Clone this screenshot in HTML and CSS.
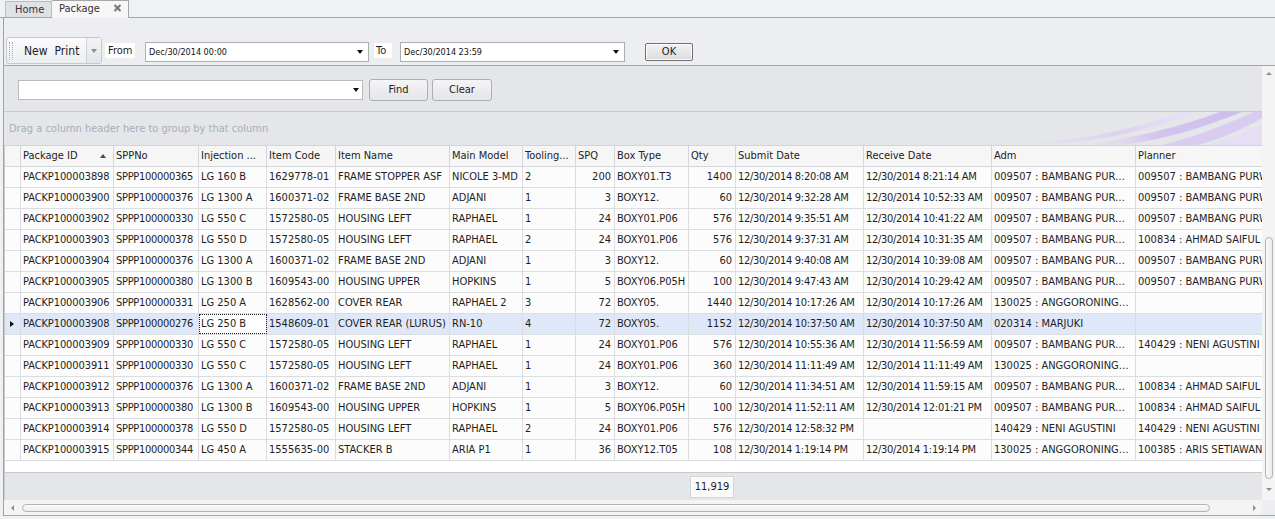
FILE: index.html
```html
<!DOCTYPE html>
<html>
<head>
<meta charset="utf-8">
<title>Package</title>
<link rel="stylesheet" href="styles.css">
</head>
<body>
<div class="tabs">
  <div class="tab home">Home</div>
  <div class="tab active"><span class="tabtext">Package</span><svg class="close" width="9" height="8" viewBox="0 0 9 8"><path d="M1.5 1L7.5 7M7.5 1L1.5 7" stroke="#767676" stroke-width="2"/></svg></div>
</div>
<div class="frame">
  <div class="toolbar">
    <div class="bar">
      <span class="grip"></span>
      <span class="tbtn new">New</span>
      <span class="tbtn print">Print</span>
      <span class="ddsep"><span class="caret grey"></span></span>
    </div>
    <span class="lbl from">From</span>
    <div class="dateedit d1"><span class="dtext">Dec/30/2014 00:00</span><span class="caret"></span></div>
    <span class="lbl to">To</span>
    <div class="dateedit d2"><span class="dtext">Dec/30/2014 23:59</span><span class="caret"></span></div>
    <div class="okbtn">OK</div>
  </div>
  <div class="main">
    <div class="content">
      <div class="findpanel">
        <div class="combo"><span class="caret"></span></div>
        <div class="btn find">Find</div>
        <div class="btn clear">Clear</div>
      </div>
      <div class="grouppanel">
        <span class="gtext">Drag a column header here to group by that column</span>
        <svg class="swoosh" width="270" height="33" viewBox="0 0 270 33">
          <defs>
            <linearGradient id="g1" x1="0" y1="0" x2="1" y2="0">
              <stop offset="0" stop-color="#e4e6ea" stop-opacity="0"/>
              <stop offset="0.6" stop-color="#ddd2f1"/>
              <stop offset="1" stop-color="#e8e2f6"/>
            </linearGradient>
            <linearGradient id="g2" x1="0" y1="0" x2="1" y2="0">
              <stop offset="0" stop-color="#e4e6ea" stop-opacity="0"/>
              <stop offset="0.5" stop-color="#d3c4ee"/>
              <stop offset="1" stop-color="#cdbdec"/>
            </linearGradient>
          </defs>
          <path d="M0 33 C70 31 130 22 190 0 L205 0 C150 22 90 32 40 33 Z" fill="url(#g1)"/>
          <path d="M80 33 C140 28 190 14 228 0 L250 0 C210 16 170 28 130 33 Z" fill="url(#g2)"/>
          <path d="M170 33 C200 26 230 14 262 0 L270 0 L270 6 C250 18 225 28 205 33 Z" fill="#d9ccf0"/>
          <path d="M215 33 C240 27 255 20 270 12 L270 33 Z" fill="#e6def5"/>
        </svg>
      </div>
      <div class="grid">
        <div class="row hdr">
          <div class="cell"></div>
          <div class="cell sorted"><span>Package ID</span><span class="sortup"></span></div>
          <div class="cell">SPPNo</div>
          <div class="cell">Injection ...</div>
          <div class="cell">Item Code</div>
          <div class="cell">Item Name</div>
          <div class="cell">Main Model</div>
          <div class="cell">Tooling...</div>
          <div class="cell">SPQ</div>
          <div class="cell">Box Type</div>
          <div class="cell">Qty</div>
          <div class="cell">Submit Date</div>
          <div class="cell">Receive Date</div>
          <div class="cell">Adm</div>
          <div class="cell last">Planner</div>
        </div>

        <div class="row">
          <div class="cell ind"></div>
          <div class="cell">PACKP100003898</div><div class="cell">SPPP100000365</div><div class="cell">LG 160 B</div><div class="cell">1629778-01</div><div class="cell">FRAME STOPPER ASF</div><div class="cell">NICOLE 3-MD</div><div class="cell">2</div><div class="cell n">200</div><div class="cell">BOXY01.T3</div><div class="cell n">1400</div><div class="cell">12/30/2014 8:20:08 AM</div><div class="cell">12/30/2014 8:21:14 AM</div><div class="cell">009507 : BAMBANG PURWANTO</div><div class="cell last">009507 : BAMBANG PURWANTO</div>
        </div>
        <div class="row">
          <div class="cell ind"></div>
          <div class="cell">PACKP100003900</div><div class="cell">SPPP100000376</div><div class="cell">LG 1300 A</div><div class="cell">1600371-02</div><div class="cell">FRAME BASE 2ND</div><div class="cell">ADJANI</div><div class="cell">1</div><div class="cell n">3</div><div class="cell">BOXY12.</div><div class="cell n">60</div><div class="cell">12/30/2014 9:32:28 AM</div><div class="cell">12/30/2014 10:52:33 AM</div><div class="cell">009507 : BAMBANG PURWANTO</div><div class="cell last">009507 : BAMBANG PURWANTO</div>
        </div>
        <div class="row">
          <div class="cell ind"></div>
          <div class="cell">PACKP100003902</div><div class="cell">SPPP100000330</div><div class="cell">LG 550 C</div><div class="cell">1572580-05</div><div class="cell">HOUSING LEFT</div><div class="cell">RAPHAEL</div><div class="cell">1</div><div class="cell n">24</div><div class="cell">BOXY01.P06</div><div class="cell n">576</div><div class="cell">12/30/2014 9:35:51 AM</div><div class="cell">12/30/2014 10:41:22 AM</div><div class="cell">009507 : BAMBANG PURWANTO</div><div class="cell last">009507 : BAMBANG PURWANTO</div>
        </div>
        <div class="row">
          <div class="cell ind"></div>
          <div class="cell">PACKP100003903</div><div class="cell">SPPP100000378</div><div class="cell">LG 550 D</div><div class="cell">1572580-05</div><div class="cell">HOUSING LEFT</div><div class="cell">RAPHAEL</div><div class="cell">2</div><div class="cell n">24</div><div class="cell">BOXY01.P06</div><div class="cell n">576</div><div class="cell">12/30/2014 9:37:31 AM</div><div class="cell">12/30/2014 10:31:35 AM</div><div class="cell">009507 : BAMBANG PURWANTO</div><div class="cell last">100834 : AHMAD SAIFUL</div>
        </div>
        <div class="row">
          <div class="cell ind"></div>
          <div class="cell">PACKP100003904</div><div class="cell">SPPP100000376</div><div class="cell">LG 1300 A</div><div class="cell">1600371-02</div><div class="cell">FRAME BASE 2ND</div><div class="cell">ADJANI</div><div class="cell">1</div><div class="cell n">3</div><div class="cell">BOXY12.</div><div class="cell n">60</div><div class="cell">12/30/2014 9:40:08 AM</div><div class="cell">12/30/2014 10:39:08 AM</div><div class="cell">009507 : BAMBANG PURWANTO</div><div class="cell last">009507 : BAMBANG PURWANTO</div>
        </div>
        <div class="row">
          <div class="cell ind"></div>
          <div class="cell">PACKP100003905</div><div class="cell">SPPP100000380</div><div class="cell">LG 1300 B</div><div class="cell">1609543-00</div><div class="cell">HOUSING UPPER</div><div class="cell">HOPKINS</div><div class="cell">1</div><div class="cell n">5</div><div class="cell">BOXY06.P05H</div><div class="cell n">100</div><div class="cell">12/30/2014 9:47:43 AM</div><div class="cell">12/30/2014 10:29:42 AM</div><div class="cell">009507 : BAMBANG PURWANTO</div><div class="cell last">009507 : BAMBANG PURWANTO</div>
        </div>
        <div class="row">
          <div class="cell ind"></div>
          <div class="cell">PACKP100003906</div><div class="cell">SPPP100000331</div><div class="cell">LG 250 A</div><div class="cell">1628562-00</div><div class="cell">COVER REAR</div><div class="cell">RAPHAEL 2</div><div class="cell">3</div><div class="cell n">72</div><div class="cell">BOXY05.</div><div class="cell n">1440</div><div class="cell">12/30/2014 10:17:26 AM</div><div class="cell">12/30/2014 10:17:26 AM</div><div class="cell">130025 : ANGGORONINGSIH</div><div class="cell last"></div>
        </div>
        <div class="row sel">
          <div class="cell ind"><span class="pointer"></span></div>
          <div class="cell">PACKP100003908</div><div class="cell">SPPP100000276</div><div class="cell focus">LG 250 B</div><div class="cell">1548609-01</div><div class="cell">COVER REAR (LURUS)</div><div class="cell">RN-10</div><div class="cell">4</div><div class="cell n">72</div><div class="cell">BOXY05.</div><div class="cell n">1152</div><div class="cell">12/30/2014 10:37:50 AM</div><div class="cell">12/30/2014 10:37:50 AM</div><div class="cell">020314 : MARJUKI</div><div class="cell last"></div>
        </div>
        <div class="row">
          <div class="cell ind"></div>
          <div class="cell">PACKP100003909</div><div class="cell">SPPP100000330</div><div class="cell">LG 550 C</div><div class="cell">1572580-05</div><div class="cell">HOUSING LEFT</div><div class="cell">RAPHAEL</div><div class="cell">1</div><div class="cell n">24</div><div class="cell">BOXY01.P06</div><div class="cell n">576</div><div class="cell">12/30/2014 10:55:36 AM</div><div class="cell">12/30/2014 11:56:59 AM</div><div class="cell">009507 : BAMBANG PURWANTO</div><div class="cell last">140429 : NENI AGUSTINI</div>
        </div>
        <div class="row">
          <div class="cell ind"></div>
          <div class="cell">PACKP100003911</div><div class="cell">SPPP100000330</div><div class="cell">LG 550 C</div><div class="cell">1572580-05</div><div class="cell">HOUSING LEFT</div><div class="cell">RAPHAEL</div><div class="cell">1</div><div class="cell n">24</div><div class="cell">BOXY01.P06</div><div class="cell n">360</div><div class="cell">12/30/2014 11:11:49 AM</div><div class="cell">12/30/2014 11:11:49 AM</div><div class="cell">130025 : ANGGORONINGSIH</div><div class="cell last"></div>
        </div>
        <div class="row">
          <div class="cell ind"></div>
          <div class="cell">PACKP100003912</div><div class="cell">SPPP100000376</div><div class="cell">LG 1300 A</div><div class="cell">1600371-02</div><div class="cell">FRAME BASE 2ND</div><div class="cell">ADJANI</div><div class="cell">1</div><div class="cell n">3</div><div class="cell">BOXY12.</div><div class="cell n">60</div><div class="cell">12/30/2014 11:34:51 AM</div><div class="cell">12/30/2014 11:59:15 AM</div><div class="cell">009507 : BAMBANG PURWANTO</div><div class="cell last">100834 : AHMAD SAIFUL</div>
        </div>
        <div class="row">
          <div class="cell ind"></div>
          <div class="cell">PACKP100003913</div><div class="cell">SPPP100000380</div><div class="cell">LG 1300 B</div><div class="cell">1609543-00</div><div class="cell">HOUSING UPPER</div><div class="cell">HOPKINS</div><div class="cell">1</div><div class="cell n">5</div><div class="cell">BOXY06.P05H</div><div class="cell n">100</div><div class="cell">12/30/2014 11:52:11 AM</div><div class="cell">12/30/2014 12:01:21 PM</div><div class="cell">009507 : BAMBANG PURWANTO</div><div class="cell last">100834 : AHMAD SAIFUL</div>
        </div>
        <div class="row">
          <div class="cell ind"></div>
          <div class="cell">PACKP100003914</div><div class="cell">SPPP100000378</div><div class="cell">LG 550 D</div><div class="cell">1572580-05</div><div class="cell">HOUSING LEFT</div><div class="cell">RAPHAEL</div><div class="cell">2</div><div class="cell n">24</div><div class="cell">BOXY01.P06</div><div class="cell n">576</div><div class="cell">12/30/2014 12:58:32 PM</div><div class="cell"></div><div class="cell">140429 : NENI AGUSTINI</div><div class="cell last">140429 : NENI AGUSTINI</div>
        </div>
        <div class="row">
          <div class="cell ind"></div>
          <div class="cell">PACKP100003915</div><div class="cell">SPPP100000344</div><div class="cell">LG 450 A</div><div class="cell">1555635-00</div><div class="cell">STACKER B</div><div class="cell">ARIA P1</div><div class="cell">1</div><div class="cell n">36</div><div class="cell">BOXY12.T05</div><div class="cell n">108</div><div class="cell">12/30/2014 1:19:14 PM</div><div class="cell">12/30/2014 1:19:14 PM</div><div class="cell">130025 : ANGGORONINGSIH</div><div class="cell last">100385 : ARIS SETIAWAN</div>
        </div>

        <div class="filler"></div>
        <div class="footer">
          <div class="total">11,919</div>
        </div>
      </div>
    </div>
    <div class="vscroll">
      <span class="arr up"></span>
      <span class="vthumb"></span>
      <span class="arr down"></span>
    </div>
    <div class="hscroll">
      <span class="arr left"></span>
      <span class="hthumb"></span>
      <span class="arr right"></span>
    </div>
    <div class="corner"></div>
  </div>
</div>
</body>
</html>
```

FILE: styles.css
```css
* { box-sizing: border-box; }
html, body { margin: 0; padding: 0; }
body {
  width: 1275px;
  height: 519px;
  overflow: hidden;
  background: #eff0f2;
  font-family: "DejaVu Sans Condensed", "DejaVu Sans", sans-serif;
  font-stretch: condensed;
  font-size: 11px;
  color: #1e1e1e;
}

/* tabs */
.tabs {
  height: 18px;
  display: flex;
  align-items: flex-end;
  padding-left: 5px;
  border-bottom: 1px solid #a4a6aa;
  background: #f0f1f3;
}
.tab {
  height: 16px;
  line-height: 15px;
  padding: 0 9px;
  color: #333;
  border: 1px solid #b9bbbf;
  border-bottom: none;
  flex: none;
}
.tab.home {
  width: 47px;
  background: #dfe1e5;
}
.tab.active {
  width: 77px;
  height: 18px;
  margin-bottom: -1px;
  line-height: 16px;
  padding-left: 7px;
  padding-right: 0;
  background: #f7f7f8;
  border-color: #a4a6aa;
  border-left: none;
  display: flex;
  align-items: flex-start;
  position: relative;
}
.tabtext { flex: none; }
.close { flex: none; margin: 3px 6px 0 auto; }

/* frame */
.frame {
  margin-left: 3px;
  border-left: 1px solid #9fa1a5;
}

/* toolbar */
.toolbar {
  height: 48px;
  padding: 19px 0 0 2px;
  display: flex;
  align-items: flex-start;
  background: #eceef1;
  border-bottom: 1px solid #a4a6aa;
}
.bar {
  width: 96px;
  height: 27px;
  display: flex;
  align-items: center;
  border: 1px solid #c6c8cc;
  border-radius: 3px;
  background: linear-gradient(#fbfbfc, #eceef0);
  flex: none;
}
.grip {
  width: 4px;
  height: 18px;
  margin-left: 2px;
  border-left: 1px dotted #a9abaf;
  border-right: 1px dotted #a9abaf;
  flex: none;
}
.tbtn { font-size: 12px; color: #1a1a1a; flex: none; }
.tbtn.new { margin-left: 11px; }
.tbtn.print { margin-left: 7px; }
.ddsep {
  margin-left: auto;
  height: 25px;
  width: 15px;
  border-left: 1px solid #cfd1d4;
  display: flex;
  align-items: center;
  justify-content: center;
  background: linear-gradient(#f2f3f5, #e3e5e8);
  flex: none;
}
.caret {
  width: 0;
  height: 0;
  flex: none;
  border-left: 3.5px solid transparent;
  border-right: 3.5px solid transparent;
  border-top: 4px solid #111;
}
.caret.grey { border-top-color: #8a8c90; }

.lbl {
  height: 15px;
  line-height: 15px;
  margin-top: 6px;
  background: #fff;
  padding: 0 3px;
  flex: none;
}
.lbl.from { margin-left: 3px; width: 30px; }
.lbl.to { margin-left: 5px; width: 18px; padding-left: 2px; }
.dateedit {
  height: 20px;
  margin-top: 5px;
  border: 1px solid #abadb3;
  background: #fff;
  display: flex;
  align-items: center;
  justify-content: space-between;
  padding: 0 5px 0 3px;
  flex: none;
}
.dtext { font-size: 9px; color: #111; }
.dateedit.d1 { margin-left: 10px; width: 224px; }
.dateedit.d2 { margin-left: 8px; width: 225px; }
.okbtn {
  margin: 6px 0 0 20px;
  width: 48px;
  height: 18px;
  line-height: 16px;
  text-align: center;
  font-size: 11px;
  border: 1px solid #707070;
  border-radius: 2px;
  background: linear-gradient(#f2f2f2, #dddddd);
  box-shadow: inset 0 0 0 1px #fcfcfc;
  flex: none;
}

/* main area */
.main {
  display: grid;
  grid-template-columns: 1258px 13px;
  grid-template-rows: 434px 15px;
  border-bottom: 1px solid #a4a6aa;
}
.content {
  overflow: hidden;
  display: flex;
  flex-direction: column;
  background: #fff;
}
.findpanel {
  height: 46px;
  flex: none;
  display: flex;
  align-items: flex-start;
  padding: 14px 0 0 14px;
  background: #e5e6ea;
  border-bottom: 1px solid #c9cbcf;
}
.combo {
  width: 345px;
  height: 20px;
  background: #fff;
  border: 1px solid #b9bbbf;
  display: flex;
  align-items: center;
  justify-content: flex-end;
  padding-right: 3px;
}
.btn {
  height: 22px;
  margin-top: -1px;
  line-height: 20px;
  text-align: center;
  border: 1px solid #acaeb2;
  border-radius: 3px;
  background: linear-gradient(#f5f5f6, #e4e5e8);
  color: #1e1e1e;
}
.btn.find { width: 59px; margin-left: 6px; }
.btn.clear { width: 60px; margin-left: 4px; }

.grouppanel {
  height: 33px;
  flex: none;
  position: relative;
  overflow: hidden;
  background: #e4e6ea;
  padding-left: 5px;
  line-height: 33px;
}
.gtext { color: #a9aeb7; position: relative; z-index: 1; }
.swoosh { position: absolute; right: 0; top: 0; }

/* grid */
.grid {
  flex: 1;
  display: flex;
  flex-direction: column;
  border-left: 1px solid #c9cbcf;
  background: #fff;
}
.row {
  display: grid;
  grid-template-columns: 16px 93px 85px 68px 69px 114px 73px 53px 39px 74px 47px 128px 128px 144px 140px;
  height: 21px;
  flex: none;
  border-bottom: 1px solid #dcdde0;
  background: #fcfcfc;
}
.row.hdr {
  height: 22px;
  border-top: 1px solid #d3d5d8;
  border-bottom: 1px solid #d3d5d8;
  background: #f6f6f7;
}
.cell {
  border-right: 1px solid #dcdde0;
  padding: 0 2px;
  line-height: 20px;
  white-space: nowrap;
  overflow: hidden;
  text-overflow: ellipsis;
}
.row .cell:nth-child(2) { letter-spacing: -0.1px; }
.row .cell:nth-child(3) { letter-spacing: -0.3px; }
.row .cell:nth-child(12),
.row .cell:nth-child(13) { letter-spacing: -0.3px; }
.hdr .cell:nth-child(n) { letter-spacing: 0; }
.hdr .cell { border-right-color: #d3d5d8; color: #222; }
.cell.n { text-align: right; padding-right: 3px; }
.cell.last { text-overflow: clip; border-right: none; }
.cell.sorted {
  display: flex;
  justify-content: space-between;
  align-items: center;
  padding-right: 7px;
}
.sortup {
  width: 0;
  height: 0;
  border-left: 3px solid transparent;
  border-right: 3px solid transparent;
  border-bottom: 4px solid #4a4a4a;
}
.cell.ind {
  display: flex;
  align-items: center;
  padding-left: 5px;
}
.pointer {
  width: 0;
  height: 0;
  border-top: 3.5px solid transparent;
  border-bottom: 3.5px solid transparent;
  border-left: 4px solid #111;
}
.row.sel { background: #dfe8f9; }
.cell.focus {
  background: #fff;
  outline: 1px dotted #222;
  outline-offset: -1px;
}
.filler { height: 11px; flex: none; background: #fff; }
.footer {
  flex: 1;
  border-top: 1px solid #c6c8cc;
  background: #e4e6ea;
  display: grid;
  grid-template-columns: 16px 93px 85px 68px 69px 114px 73px 53px 39px 74px 47px 128px 128px 144px 140px;
}
.total {
  grid-column: 11;
  margin: 3px 0 0 1px;
  width: 44px;
  height: 22px;
  line-height: 20px;
  text-align: center;
  background: #fafafa;
  border: 1px solid #d3d5d8;
  color: #222;
}

/* scrollbars */
.vscroll {
  background: #f4f4f5;
  display: flex;
  flex-direction: column;
  align-items: center;
  padding-left: 1px;
}
.arr { width: 0; height: 0; flex: none; }
.arr.up {
  margin-top: 6px;
  border-left: 3px solid transparent;
  border-right: 3px solid transparent;
  border-bottom: 3px solid #8c8e92;
}
.arr.down {
  margin-top: 9px;
  border-left: 3px solid transparent;
  border-right: 3px solid transparent;
  border-top: 3px solid #8c8e92;
}
.vthumb {
  margin-top: 162px;
  width: 8px;
  height: 242px;
  flex: none;
  border: 1px solid #b1b3b7;
  border-radius: 4px;
  background: linear-gradient(90deg, #fbfbfb, #eaebed);
}
.hscroll {
  background: #f4f4f5;
  display: flex;
  align-items: center;
}
.arr.left {
  margin-left: 7px;
  border-top: 3px solid transparent;
  border-bottom: 3px solid transparent;
  border-right: 3px solid #8c8e92;
}
.hthumb {
  margin-left: 8px;
  width: 1188px;
  height: 8px;
  flex: none;
  border: 1px solid #b1b3b7;
  border-radius: 4px;
  background: linear-gradient(#fbfbfb, #eaebed);
}
.arr.right {
  margin-left: 43px;
  border-top: 3px solid transparent;
  border-bottom: 3px solid transparent;
  border-left: 3px solid #8c8e92;
}
.corner { background: #eceef1; }
```
